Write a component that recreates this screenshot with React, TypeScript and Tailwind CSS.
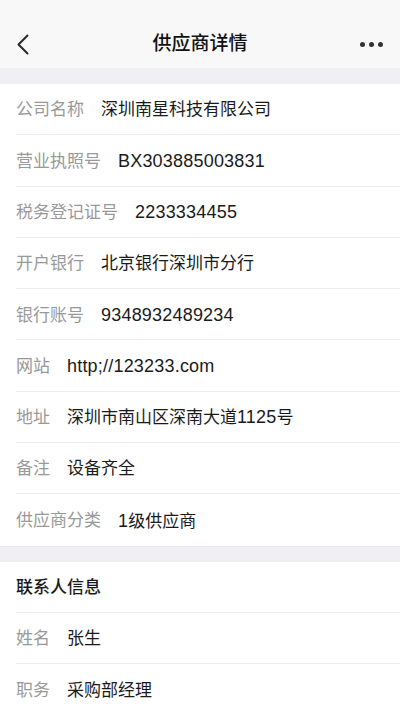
const company: [string, string][] = [
  ['公司名称', '深圳南星科技有限公司'],
  ['营业执照号', 'BX303885003831'],
  ['税务登记证号', '2233334455'],
  ['开户银行', '北京银行深圳市分行'],
  ['银行账号', '9348932489234'],
  ['网站', 'http;//123233.com'],
  ['地址', '深圳市南山区深南大道1125号'],
  ['备注', '设备齐全'],
  ['供应商分类', '1级供应商'],
]

const contact: [string, string][] = [
  ['姓名', '张生'],
  ['职务', '采购部经理'],
]

// latin runs render a touch larger than the CJK glyphs, like the iOS font
function Mixed({ text }: { text: string }) {
  const parts = text.split(/([\x20-\x7e]+)/).filter(Boolean)
  return (
    <>
      {parts.map((p, i) =>
        /^[\x20-\x7e]+$/.test(p) ? (
          <span key={i} className="text-[18px] tracking-[0.2px]">{p}</span>
        ) : (
          <span key={i}>{p}</span>
        ),
      )}
    </>
  )
}

function Row({ label, value, last }: { label: string; value: string; last?: boolean }) {
  return (
    <div className="pl-4">
      <div
        className={`h-[51.3px] pt-[2px] flex items-center text-[17px] ${last ? '' : 'border-b border-[#ededed]'}`}
      >
        <span className="text-[#999999] shrink-0">{label}</span>
        <span className="ml-[17px] text-[#1a1a1a]">
          <Mixed text={value} />
        </span>
      </div>
    </div>
  )
}

export default function App() {
  return (
    <div
      className="w-[400px] h-[710px] overflow-hidden bg-white"
      style={{ fontFamily: '"Liberation Sans", "Noto Sans CJK SC", sans-serif' }}
    >
      <header className="relative h-[68px] bg-[#f8f8f8]">
        <svg className="absolute left-[16px] top-[34px]" width="14" height="22" viewBox="0 0 14 22">
          <polyline
            points="11.5,1.5 2.5,10.5 11.5,19.5"
            fill="none"
            stroke="#2a2a2a"
            strokeWidth="2"
            strokeLinecap="round"
            strokeLinejoin="round"
          />
        </svg>
        <h1 className="absolute inset-x-0 top-[31px] text-center text-[19px] leading-[26px] font-medium text-[#111]">
          供应商详情
        </h1>
        <div className="absolute left-[360px] top-[42px] flex gap-[4.5px]">
          <span className="w-[4.5px] h-[4.5px] rounded-full bg-[#333]" />
          <span className="w-[4.5px] h-[4.5px] rounded-full bg-[#333]" />
          <span className="w-[4.5px] h-[4.5px] rounded-full bg-[#333]" />
        </div>
      </header>

      <div className="h-[16px] bg-[#efeff4]" />

      <section>
        {company.map(([l, v], i) => (
          <Row key={l} label={l} value={v} last={i === company.length - 1} />
        ))}
      </section>

      <div className="h-[16px] bg-[#efeff4] border-t border-[#e8e8ec]" />

      <section>
        <div className="pl-4">
          <div className="h-[51.3px] pt-[2px] flex items-center border-b border-[#ededed] text-[17px] font-medium text-[#1a1a1a]">
            联系人信息
          </div>
        </div>
        {contact.map(([l, v], i) => (
          <Row key={l} label={l} value={v} last={i === contact.length - 1} />
        ))}
      </section>
    </div>
  )
}
